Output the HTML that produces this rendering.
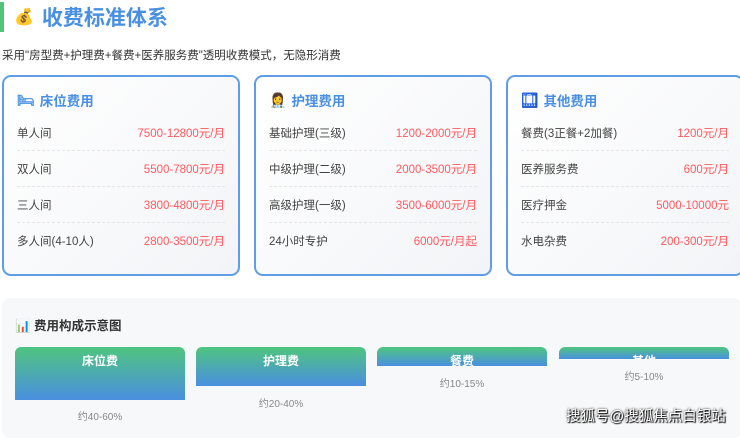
<!DOCTYPE html>
<html><head><meta charset="utf-8"><style>
*{margin:0;padding:0;box-sizing:border-box}
body{width:740px;height:431px;overflow:hidden;background:#fff;font-family:"Liberation Sans","Noto Sans CJK SC",sans-serif;position:relative}
.h{position:absolute;left:0;top:2px;height:30px;border-left:4px solid #52c47a;padding-left:10px;display:flex;align-items:center}
.h span{font-size:21px;font-weight:bold;color:#4a90e2;margin-left:8px}
.sub{position:absolute;left:2px;top:47px;font-size:11.5px;color:#333}
.card{position:absolute;top:75px;width:238px;height:201px;border:2px solid #5f9de6;border-radius:9px;background:linear-gradient(135deg,#fff,#f2f4f7);padding:8px 13px 0}
.ct{height:30px;display:flex;align-items:center;font-size:13.5px;font-weight:bold;color:#4a90e2}
.ct i{font-style:normal;margin-right:5px;font-size:14px}
.r{height:36px;display:flex;justify-content:space-between;align-items:center;font-size:11.5px;color:#444;border-bottom:1px dashed #e4e6ea}
.r:last-child{border-bottom:none}
.r b{color:#ff5a5f;font-weight:normal}
.sec{position:absolute;left:2px;top:298px;width:740px;height:140px;background:#f7f8fa;border-radius:8px}
.st{position:absolute;left:13px;top:17px;font-size:12.5px;font-weight:bold;color:#333}
.bar{position:absolute;top:49px;width:170px;border-radius:6px 6px 0 0;background:linear-gradient(#4fc57f,#4a8fe0);color:#fff;font-weight:bold;font-size:12px;text-align:center;padding-top:7px;line-height:14px}
.lb{position:absolute;width:170px;text-align:center;font-size:10px;color:#888}
.wm{position:absolute;left:566px;top:405px;font-size:14.5px;color:#fff;text-shadow:0 0 2px #000,1px 1px 1px #000}
</style></head><body>
<div class="h">💰<span>收费标准体系</span></div>
<div class="sub">采用"房型费+护理费+餐费+医养服务费"透明收费模式，无隐形消费</div>
<div class="card" style="left:2px"><div class="ct"><i>🛏</i>床位费用</div>
<div class="r"><span>单人间</span><b>7500-12800元/月</b></div>
<div class="r"><span>双人间</span><b>5500-7800元/月</b></div>
<div class="r"><span>三人间</span><b>3800-4800元/月</b></div>
<div class="r"><span>多人间(4-10人)</span><b>2800-3500元/月</b></div></div>
<div class="card" style="left:254px"><div class="ct"><i>👩‍⚕️</i>护理费用</div>
<div class="r"><span>基础护理(三级)</span><b>1200-2000元/月</b></div>
<div class="r"><span>中级护理(二级)</span><b>2000-3500元/月</b></div>
<div class="r"><span>高级护理(一级)</span><b>3500-6000元/月</b></div>
<div class="r"><span>24小时专护</span><b>6000元/月起</b></div></div>
<div class="card" style="left:506px"><div class="ct"><i>🛄</i>其他费用</div>
<div class="r"><span>餐费(3正餐+2加餐)</span><b>1200元/月</b></div>
<div class="r"><span>医养服务费</span><b>600元/月</b></div>
<div class="r"><span>医疗押金</span><b>5000-10000元</b></div>
<div class="r"><span>水电杂费</span><b>200-300元/月</b></div></div>
<div class="sec"><div class="st">📊 费用构成示意图</div>
<div class="bar" style="left:13px;height:53px">床位费</div><div class="lb" style="left:13px;top:110px">约40-60%</div>
<div class="bar" style="left:194px;height:39px">护理费</div><div class="lb" style="left:194px;top:97px">约20-40%</div>
<div class="bar" style="left:375px;height:19px;overflow:visible">餐费</div><div class="lb" style="left:375px;top:77px">约10-15%</div>
<div class="bar" style="left:557px;height:12px;overflow:hidden">其他</div><div class="lb" style="left:557px;top:70px">约5-10%</div>
</div>
<div class="wm">搜狐号@搜狐焦点白银站</div>
</body></html>
